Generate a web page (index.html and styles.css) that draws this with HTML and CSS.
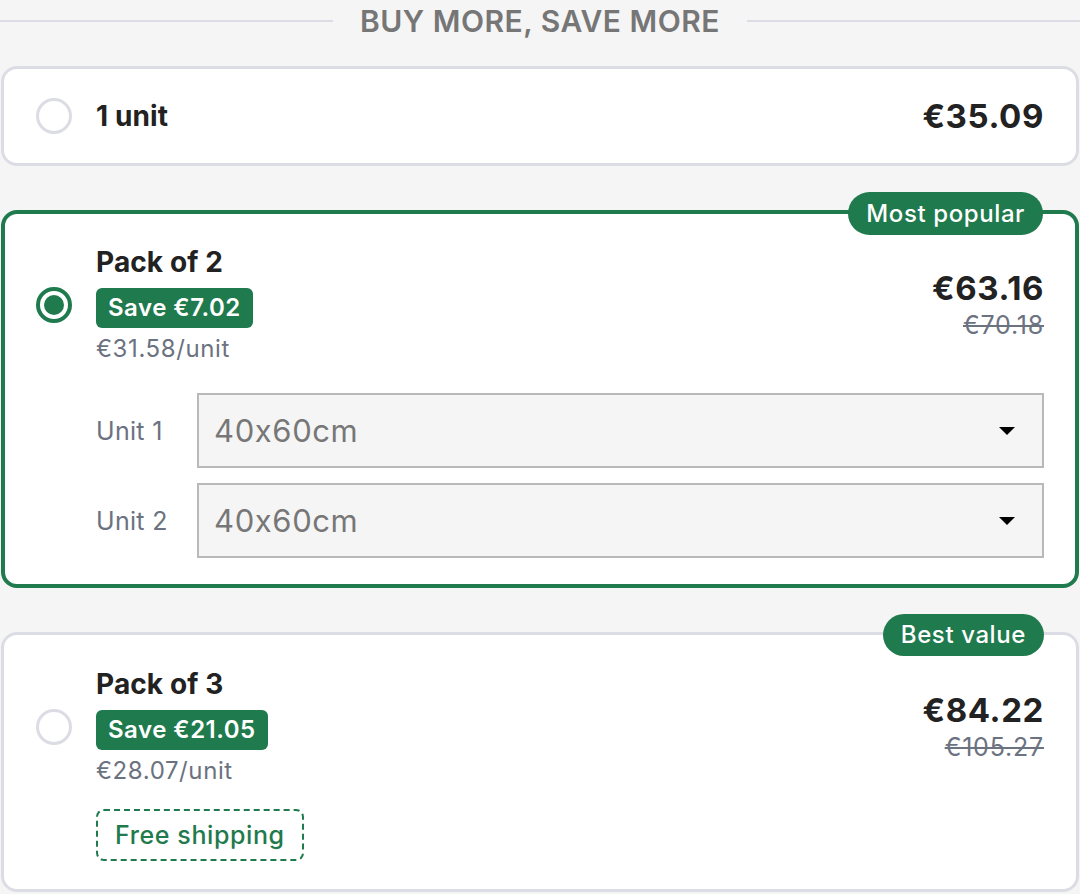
FILE: index.html
```html
<!DOCTYPE html>
<html lang="en">
<head>
<meta charset="utf-8">
<title>Buy more, save more</title>
<link rel="stylesheet" href="styles.css">
</head>
<body>
<div class="offers">
  <div class="heading">
    <span class="heading-line"></span>
    <span class="heading-text">BUY MORE, SAVE MORE</span>
    <span class="heading-line"></span>
  </div>

  <div class="card card-single">
    <div class="card-row">
      <span class="radio"></span>
      <div class="info">
        <div class="title">1 unit</div>
      </div>
      <div class="prices">
        <div class="price">€35.09</div>
      </div>
    </div>
  </div>

  <div class="card card-selected">
    <span class="tag">Most popular</span>
    <div class="card-row">
      <span class="radio radio-on"></span>
      <div class="info">
        <div class="title">Pack of 2</div>
        <div class="save">Save €7.02</div>
        <div class="per-unit">€31.58/unit</div>
      </div>
      <div class="prices">
        <div class="price">€63.16</div>
        <div class="old-price">€70.18</div>
      </div>
    </div>
    <div class="extras">
      <div class="unit-row">
        <span class="unit-label">Unit 1</span>
        <div class="select"><span class="select-value">40x60cm</span><span class="caret"></span></div>
      </div>
      <div class="unit-row">
        <span class="unit-label">Unit 2</span>
        <div class="select"><span class="select-value">40x60cm</span><span class="caret"></span></div>
      </div>
    </div>
  </div>

  <div class="card card-pack">
    <span class="tag">Best value</span>
    <div class="card-row">
      <span class="radio"></span>
      <div class="info">
        <div class="title">Pack of 3</div>
        <div class="save">Save €21.05</div>
        <div class="per-unit">€28.07/unit</div>
      </div>
      <div class="prices">
        <div class="price">€84.22</div>
        <div class="old-price">€105.27</div>
      </div>
    </div>
    <div class="extras">
      <span class="shipping">Free shipping</span>
    </div>
  </div>
</div>
</body>
</html>
```

FILE: styles.css
```css
* { box-sizing: border-box; }

html, body {
  margin: 0;
  padding: 0;
  background: #f5f5f5;
}

body {
  font-family: Inter, "Noto Sans", sans-serif;
  color: #222222;
}

.offers {
  padding: 0 1px;
  display: flex;
  flex-direction: column;
}

.heading {
  display: flex;
  align-items: center;
  gap: 27px;
  height: 42px;
  margin: 0 -1px;
}

.heading-line {
  flex: 1;
  height: 2px;
  background: #dcdde4;
}

.heading-text {
  font-size: 30px;
  font-weight: 600;
  color: #767676;
  line-height: 42px;
  letter-spacing: 0.5px;
  white-space: nowrap;
}

.card {
  position: relative;
  background: #ffffff;
  border: 3px solid #dcdde4;
  border-radius: 16px;
  padding: 33px 32px 28px 32px;
}

.card-single {
  margin-top: 24px;
  padding-top: 28px;
  padding-bottom: 28px;
}

.card-selected {
  margin-top: 44px;
  border: 4px solid #1f7a4d;
  padding: 32px 31px 26px 31px;
}

.card-pack {
  margin-top: 44px;
  padding-top: 33px;
}

.card-row {
  display: flex;
  align-items: center;
}

.radio {
  flex-shrink: 0;
  width: 36px;
  height: 36px;
  border-radius: 50%;
  border: 3px solid #dcdde4;
  background: #ffffff;
  margin-right: 24px;
  display: flex;
  align-items: center;
  justify-content: center;
}

.radio-on {
  border: 4px solid #1f7a4d;
}

.radio-on::after {
  content: "";
  width: 20px;
  height: 20px;
  border-radius: 50%;
  background: #1f7a4d;
}

.info {
  flex: 1;
  display: flex;
  flex-direction: column;
  align-items: flex-start;
}

.title {
  font-size: 28px;
  font-weight: 700;
  line-height: 32px;
  color: #222222;
  letter-spacing: 0.1px;
}

.save {
  margin-top: 10px;
  background: #1f7a4d;
  color: #ffffff;
  font-size: 24px;
  font-weight: 600;
  line-height: 40px;
  padding: 0 12px;
  border-radius: 6px;
  letter-spacing: 0.5px;
}

.per-unit {
  margin-top: 7px;
  font-size: 24px;
  line-height: 28px;
  color: #6b7280;
  letter-spacing: 0.6px;
}

.prices {
  text-align: right;
}

.price {
  font-size: 33px;
  font-weight: 700;
  line-height: 38px;
  color: #222222;
  letter-spacing: 0.6px;
}

.old-price {
  margin-top: 3px;
  font-size: 25px;
  line-height: 30px;
  color: #6b7280;
  text-decoration: line-through;
  letter-spacing: 0.8px;
}

.tag {
  position: absolute;
  top: -22px;
  right: 32px;
  background: #1f7a4d;
  color: #ffffff;
  font-size: 24px;
  font-weight: 500;
  line-height: 43px;
  padding: 0 18px;
  border-radius: 22px;
  white-space: nowrap;
  letter-spacing: 0.6px;
}

.card-pack .tag {
  top: -21px;
  right: 32px;
  line-height: 42px;
}

.extras {
  margin-left: 60px;
  display: flex;
  flex-direction: column;
  align-items: flex-start;
  gap: 15px;
}

.card-selected .extras {
  margin-top: 30px;
  align-items: stretch;
}

.card-pack .extras {
  margin-top: 24px;
}

.unit-row {
  display: flex;
  align-items: center;
}

.unit-label {
  width: 101px;
  flex-shrink: 0;
  font-size: 25px;
  color: #6b7280;
  letter-spacing: 0.3px;
}

.select {
  flex: 1;
  height: 75px;
  background: #f5f5f5;
  border: 2px solid #b9b9b9;
  display: flex;
  align-items: center;
  justify-content: space-between;
  padding: 0 27px 0 15px;
}

.select-value {
  font-size: 31px;
  color: #777777;
  letter-spacing: 0.6px;
}

.caret {
  width: 0;
  height: 0;
  border-left: 8px solid transparent;
  border-right: 8px solid transparent;
  border-top: 8px solid #000000;
}

.shipping {
  border: 2px dashed #1f7a4d;
  border-radius: 8px;
  color: #1f7a4d;
  font-size: 25px;
  font-weight: 500;
  line-height: 48px;
  padding: 0 17px;
  letter-spacing: 0.6px;
}
```
